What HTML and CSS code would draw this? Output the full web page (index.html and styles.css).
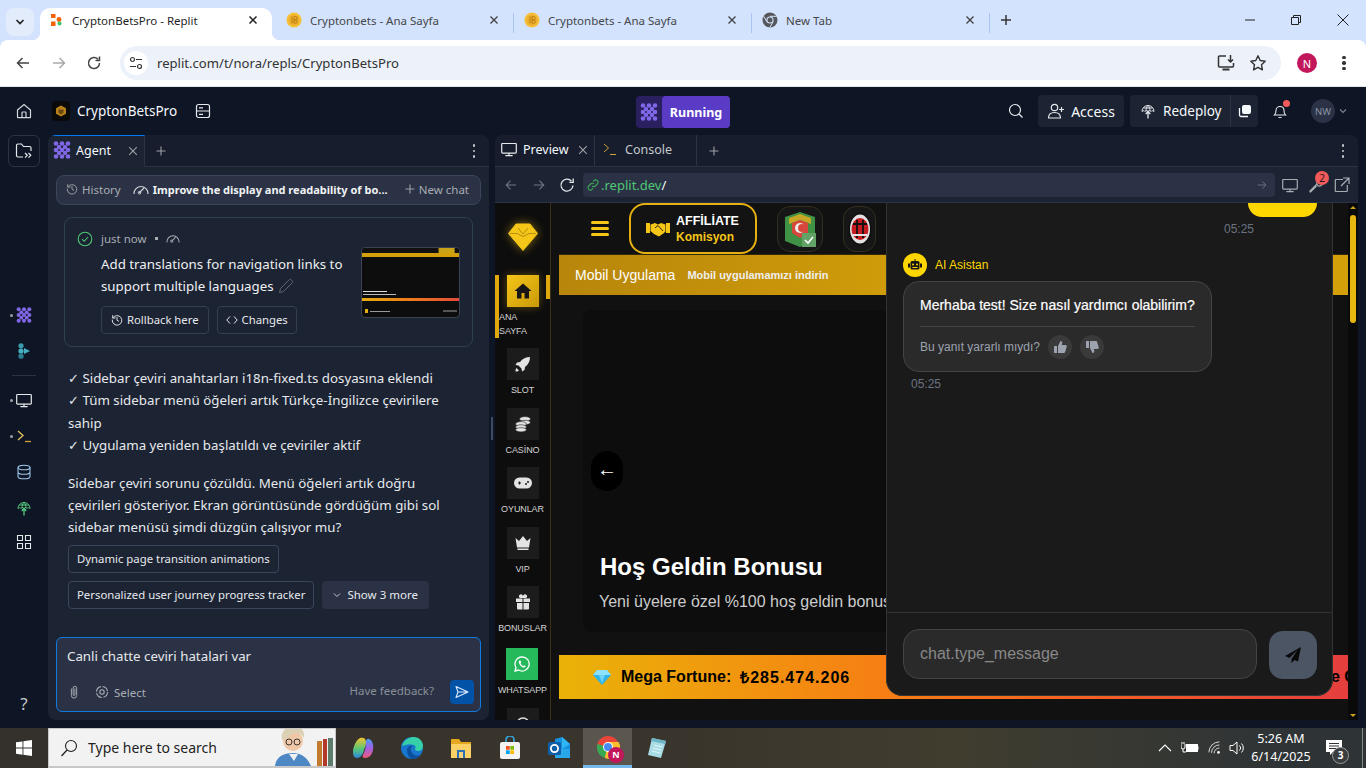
FILE: index.html
```html
<!DOCTYPE html>
<html lang="tr">
<head>
<meta charset="utf-8">
<title>CryptonBetsPro - Replit</title>
<link rel="stylesheet" href="styles.css">
</head>
<body>
<svg class="sprite" xmlns="http://www.w3.org/2000/svg">
  <defs>
    <linearGradient id="cp1" x1="0" y1="0" x2="0" y2="1"><stop offset="0" stop-color="#f0c330"/><stop offset=".55" stop-color="#58c878"/><stop offset="1" stop-color="#2b86e0"/></linearGradient>
    <linearGradient id="cp2" x1="0" y1="0" x2="0" y2="1"><stop offset="0" stop-color="#4a9cf0"/><stop offset=".45" stop-color="#9a62e8"/><stop offset="1" stop-color="#f05a7a"/></linearGradient>
  </defs>
  <symbol id="agent" viewBox="0 0 18 18">
    <g fill="#8067e6"><circle cx="3" cy="2.500" r="2.300"/><circle cx="9" cy="2.500" r="2.300"/><circle cx="15" cy="2.500" r="2.300"/><circle cx="6" cy="6" r="2.200"/><circle cx="12" cy="6" r="2.200"/><circle cx="3" cy="9" r="2.300"/><circle cx="9" cy="9" r="2.300"/><circle cx="15" cy="9" r="2.300"/><circle cx="6" cy="12" r="2.200"/><circle cx="12" cy="12" r="2.200"/><circle cx="3" cy="15.500" r="2.300"/><circle cx="9" cy="15.500" r="2.300"/><circle cx="15" cy="15.500" r="2.300"/></g>
  </symbol>
  <symbol id="coin" viewBox="0 0 16 16">
    <circle cx="8" cy="8" r="7.6" fill="#f5c13c"/><circle cx="8" cy="8" r="5.6" fill="#eeb02c"/><path d="M6 4.5v7M8 4.5h1.5a1.6 1.6 0 0 1 0 3.4H8m0 0h1.8a1.6 1.6 0 0 1 0 3.2H8V4.5" fill="none" stroke="#b97f15" stroke-width="1"/>
  </symbol>
  <symbol id="gauge" viewBox="0 0 16 12">
    <path d="M1 10.5a7 7 0 0 1 14 0M6.5 9.5l4-4" fill="none" stroke="currentColor" stroke-width="1.2" stroke-linecap="round"/><circle cx="6.5" cy="9.7" r="1.3" fill="none" stroke="currentColor"/>
  </symbol>
  <symbol id="history" viewBox="0 0 14 14">
    <path d="M2.2 4.5A5.6 5.6 0 1 1 1.4 7M2 1.8v2.9h2.9M7 4v3.2l2 1.2" fill="none" stroke="currentColor" stroke-width="1.1" stroke-linecap="round"/>
  </symbol>
  <symbol id="monitor" viewBox="0 0 16 16">
    <path d="M1.5 2.5h13a.8.8 0 0 1 .8.8v8a.8.8 0 0 1-.8.8h-13a.8.8 0 0 1-.8-.8v-8a.8.8 0 0 1 .8-.8zM8 12v2.4M4.8 14.6h6.4" fill="none" stroke="currentColor" stroke-width="1.2" stroke-linecap="round"/>
  </symbol>
  <symbol id="close" viewBox="0 0 10 10">
    <path d="M1.2 1.2l7.6 7.6M8.8 1.2L1.2 8.8" fill="none" stroke="currentColor" stroke-width="1.1"/>
  </symbol>
  <symbol id="plus" viewBox="0 0 10 10">
    <path d="M5 .5v9M.5 5h9" fill="none" stroke="currentColor" stroke-width="1.1"/>
  </symbol>
  <symbol id="arrow" viewBox="0 0 14 14">
    <path d="M13 7H1.5M6.5 2L1.5 7l5 5" fill="none" stroke="currentColor" stroke-width="1.3"/>
  </symbol>
  <symbol id="deploy" viewBox="0 0 16 16">
    <path d="M2 8.500A6 6 0 0 1 14 8.500c-1-1-2.500-1-3 0-.6-1-2.400-1-3 0-.6-1-2.400-1-3 0-.5-1-2-1-3 0zM8 2.500C6.500 4 6 6 6 8M8 2.500C9.500 4 10 6 10 8M3.500 5h9" fill="none" stroke="currentColor" stroke-width="1"/>
    <path d="M8 15.500V8.500M5.700 11L8 8.500 10.300 11" fill="none" stroke="currentColor" stroke-width="1.300"/>
  </symbol>
</svg>

<header class="tabstrip">
  <button class="tablist"><svg class="i10" viewBox="0 0 10 10"><path d="M1.5 3l3.5 3.6L8.5 3" fill="none" stroke="#1f1f1f" stroke-width="1.5"/></svg></button>
  <div class="tab tab-active">
    <svg class="i14" viewBox="0 0 14 14"><rect x="1" y="1" width="4.500" height="4" fill="#f26207"/><rect x="1" y="8.500" width="4.500" height="4.500" fill="#f26207"/><circle cx="9" cy="6.500" r="2.400" fill="#f26207"/><circle cx="9.500" cy="10.500" r="2" fill="#39c46a"/></svg>
    <span class="tab-title tab-title-active">CryptonBetsPro - Replit</span>
    <svg class="i10 tab-x" viewBox="0 0 10 10"><path d="M1.5 1.500l7 7M8.500 1.500l-7 7" fill="none" stroke="#222" stroke-width="1.5"/></svg>
  </div>
  <div class="tab tab-wide">
    <svg class="i16"><use href="#coin"/></svg>
    <span class="tab-title">Cryptonbets - Ana Sayfa</span>
    <svg class="i10 tab-x" viewBox="0 0 10 10"><path d="M1.5 1.500l7 7M8.500 1.500l-7 7" fill="none" stroke="#444" stroke-width="1.4"/></svg>
  </div>
  <div class="tab tab-sep">
    <svg class="i16"><use href="#coin"/></svg>
    <span class="tab-title">Cryptonbets - Ana Sayfa</span>
    <svg class="i10 tab-x" viewBox="0 0 10 10"><path d="M1.5 1.500l7 7M8.500 1.500l-7 7" fill="none" stroke="#444" stroke-width="1.4"/></svg>
  </div>
  <div class="tab tab-sep">
    <svg class="i16" viewBox="0 0 16 16"><circle cx="8" cy="8" r="7.500" fill="#55575c"/><circle cx="8" cy="8" r="3.600" fill="#d3e3fd"/><circle cx="8" cy="8" r="2.500" fill="#55575c"/><path d="M8 4.300h6.600M4.900 9.800L1.700 4.300M11.100 9.800L7.800 15.400" stroke="#d3e3fd" stroke-width="1"/></svg>
    <span class="tab-title">New Tab</span>
    <svg class="i10 tab-x" viewBox="0 0 10 10"><path d="M1.5 1.500l7 7M8.500 1.500l-7 7" fill="none" stroke="#444" stroke-width="1.4"/></svg>
  </div>
  <div class="newtab-wrap"><svg class="i12" viewBox="0 0 12 12"><path d="M6 1v10M1 6h10" stroke="#333" stroke-width="1.5"/></svg></div>
  <div class="winctl">
    <svg class="i10" viewBox="0 0 10 10"><path d="M0 5h10" stroke="#222"/></svg>
    <svg class="i10" viewBox="0 0 10 10"><path d="M2.500 2.500V.5h7v7h-2M.5 2.500h7v7h-7z" fill="none" stroke="#222"/></svg>
    <svg class="i12" viewBox="0 0 12 12"><path d="M.5.5l11 11M11.500.5l-11 11" stroke="#222"/></svg>
  </div>
</header>

<nav class="toolbar">
  <svg class="i16 tb-back" viewBox="0 0 16 16"><path d="M14 8H2.500M7.500 3L2.500 8l5 5" fill="none" stroke="#444" stroke-width="1.500"/></svg>
  <svg class="i16 tb-fwd" viewBox="0 0 16 16"><path d="M2 8h11.500M8.500 3l5 5-5 5" fill="none" stroke="#aaa" stroke-width="1.500"/></svg>
  <svg class="i16 tb-reload" viewBox="0 0 16 16"><path d="M13.500 8A5.500 5.500 0 1 1 12 4.300M13.500 1.500v4h-4" fill="none" stroke="#444" stroke-width="1.500"/></svg>
  <div class="omnibox">
    <span class="siteinfo"><svg class="i14" viewBox="0 0 14 14"><circle cx="3.500" cy="3.500" r="2" fill="none" stroke="#333" stroke-width="1.200"/><path d="M7 3.500h6M1 10.500h6" stroke="#333" stroke-width="1.200"/><circle cx="10.500" cy="10.500" r="2" fill="none" stroke="#333" stroke-width="1.200"/></svg></span>
    <span class="omni-url">replit.com/t/nora/repls/CryptonBetsPro</span>
    <svg class="i18 omni-install" viewBox="0 0 18 18"><path d="M9 2H2.500a1 1 0 0 0-1 1v9a1 1 0 0 0 1 1h13a1 1 0 0 0 1-1V9" fill="none" stroke="#333" stroke-width="1.500"/><path d="M13.500 1v6.500M11 5.500l2.500 2.500L16 5.500" fill="none" stroke="#333" stroke-width="1.500"/><path d="M5.500 15.500h7" stroke="#333" stroke-width="2"/></svg>
    <svg class="i18" viewBox="0 0 18 18"><path d="M9 1.800l2.200 4.700 5 .7-3.700 3.500.9 5.100L9 13.300l-4.400 2.500.9-5.100L1.800 7.200l5-.7z" fill="none" stroke="#333" stroke-width="1.400" stroke-linejoin="round"/></svg>
  </div>
  <span class="profile">N</span>
  <span class="chrome-dots"><i></i><i></i><i></i></span>
</nav>

<div class="app">
  <div class="topbar">
    <svg class="i16 home-ic" viewBox="0 0 16 16"><path d="M1.500 7L8 1.500 14.500 7v7a.7.7 0 0 1-.7.7H2.200a.7.7 0 0 1-.7-.7zM6 14.700V9.500a.5.5 0 0 1 .5-.5h3a.5.5 0 0 1 .5.500v5.200" fill="none" stroke="#d4d9de" stroke-width="1.200"/></svg>
    <span class="project-logo"><svg class="i12" viewBox="0 0 12 12"><path d="M6 .5l5 2.800v5.400L6 11.500 1 8.700V3.300z" fill="#b6801a"/><path d="M3.500 4.500h5v3L6 9.500l-2.500-2z" fill="#6a4610"/></svg></span>
    <span class="project-name">CryptonBetsPro</span>
    <svg class="i16 db-ic" viewBox="0 0 16 16"><rect x="1.500" y="1.500" width="13" height="13" rx="2" fill="none" stroke="#e6e9ec" stroke-width="1.200"/><path d="M1.500 8h13M4 4.800h4M4 11.300h4" stroke="#e6e9ec" stroke-width="1.200"/></svg>
    <div class="run-group">
      <span class="run-left"><svg class="i18"><use href="#agent"/></svg></span>
      <span class="run-right">Running</span>
    </div>
    <div class="top-right">
      <svg class="i16" viewBox="0 0 16 16"><circle cx="7" cy="7" r="5.500" fill="none" stroke="#e6e9ec" stroke-width="1.200"/><path d="M11 11l3.500 3.500" stroke="#e6e9ec" stroke-width="1.200"/></svg>
      <button class="access-btn"><svg class="i18" viewBox="0 0 18 18"><circle cx="7.500" cy="5.500" r="3.200" fill="none" stroke="#e6e9ec" stroke-width="1.200"/><path d="M1.500 16c0-3.500 2.500-5.500 6-5.500s6 2 6 5.500zM14.500 5v5M12 7.500h5" fill="none" stroke="#e6e9ec" stroke-width="1.200"/></svg>Access</button>
      <div class="deploy-group">
        <span class="deploy-main"><svg class="i16 ic-light"><use href="#deploy"/></svg>Redeploy</span>
        <span class="deploy-copy"><svg class="i14" viewBox="0 0 14 14"><rect x="4" y="1" width="9" height="9" rx="2" fill="#f5f9fc"/><path d="M1.500 4v7a1.500 1.500 0 0 0 1.500 1.500h7" fill="none" stroke="#f5f9fc" stroke-width="1.300"/></svg></span>
      </div>
      <span class="bell"><svg class="i16" viewBox="0 0 16 16"><path d="M2.500 12c1.200-1 1.500-2.500 1.500-4.500 0-2.500 1.800-4 4-4s4 1.500 4 4c0 2 .3 3.500 1.500 4.500zM6.500 14.500h3" fill="none" stroke="#e6e9ec" stroke-width="1.100"/></svg><i class="bell-dot"></i></span>
      <span class="user-avatar">NW</span>
      <svg class="i10" viewBox="0 0 10 10"><path d="M2 3.500l3 3 3-3" fill="none" stroke="#7d8592" stroke-width="1.100"/></svg>
    </div>
  </div>

  <div class="workspace">
    <aside class="rail">
      <span class="rail-files"><svg class="i18" viewBox="0 0 18 18"><path d="M8 15H3a1.500 1.500 0 0 1-1.500-1.500v-10A1.500 1.500 0 0 1 3 2h3.500l2 2.500h6A1.500 1.500 0 0 1 16 6v3" fill="none" stroke="#e6e9ec" stroke-width="1.200"/><path d="M10 11l2.300 2.300L10 15.600M13.500 11l2.300 2.300-2.300 2.300" fill="none" stroke="#e6e9ec" stroke-width="1.200"/></svg></span>
      <span class="rail-item rail-agent"><i class="rail-dot"></i><svg class="i16"><use href="#agent"/></svg></span>
      <span class="rail-item rail-gap20"><svg class="i16" viewBox="0 0 16 16"><circle cx="5" cy="2.800" r="2.600" fill="#3a9aad"/><circle cx="5" cy="8" r="2.600" fill="#45b0c2"/><circle cx="5" cy="13.200" r="2.600" fill="#2c7f90"/><path d="M8 5l6 3-6 3z" fill="#45b0c2"/></svg></span>
      <span class="rail-sep"></span>
      <span class="rail-item"><i class="rail-dot"></i><svg class="i16 ic-light"><use href="#monitor"/></svg></span>
      <span class="rail-item rail-gap20"><i class="rail-dot rail-dot-o"></i><svg class="i16" viewBox="0 0 16 16"><path d="M2 3l5 4.500L2 12" fill="none" stroke="#e6c25e" stroke-width="1.300"/><path d="M9 13.500h6" stroke="#cfa23a" stroke-width="1.300"/></svg></span>
      <span class="rail-item rail-gap20"><svg class="i16" viewBox="0 0 16 16"><ellipse cx="8" cy="3.500" rx="6" ry="2.300" fill="none" stroke="#9cc6ea" stroke-width="1.100"/><path d="M2 3.500v9c0 1.200 2.700 2.300 6 2.300s6-1.100 6-2.300v-9M2 8c0 1.200 2.700 2.300 6 2.300s6-1.100 6-2.300" fill="none" stroke="#9cc6ea" stroke-width="1.100"/></svg></span>
      <span class="rail-item rail-gap20 rail-green"><svg class="i16"><use href="#deploy"/></svg></span>
      <span class="rail-item rail-gap18"><svg class="i16" viewBox="0 0 16 16"><path d="M1.500 1.500h5v5h-5zM9.500 1.500h5v5h-5zM1.500 9.500h5v5h-5zM9.500 9.500h5v5h-5z" fill="none" stroke="#e6e9ec" stroke-width="1.100"/></svg></span>
      <span class="rail-help">?</span>
    </aside>

    <section class="agent">
      <div class="ptabs">
        <div class="ptab ptab-agent">
          <svg class="i18"><use href="#agent"/></svg>
          <span class="ptab-name">Agent</span>
          <svg class="i10 ptab-x"><use href="#close"/></svg>
        </div>
        <svg class="i10 ptab-plus"><use href="#plus"/></svg>
        <span class="kebab"><i></i><i></i><i></i></span>
      </div>

      <div class="historybar">
        <svg class="i12 hb-ic"><use href="#history"/></svg>
        <span class="hb-muted">History</span>
        <svg class="i16 hb-gauge"><use href="#gauge"/></svg>
        <span class="hb-title">Improve the display and readability of bo...</span>
        <svg class="i10 hb-plus"><use href="#plus"/></svg>
        <span class="hb-muted">New chat</span>
      </div>

      <article class="checkpoint">
        <svg class="i16 cp-check" viewBox="0 0 16 16"><circle cx="8" cy="8" r="6.800" fill="none" stroke="#4fc774" stroke-width="1.100"/><path d="M5 8.200l2.200 2.100L11 6" fill="none" stroke="#4fc774" stroke-width="1.100"/></svg>
        <div class="cp-body">
          <div class="cp-meta"><span>just now</span><i class="cp-dot"></i><svg class="i14"><use href="#gauge"/></svg></div>
          <p class="cp-title">Add translations for navigation links to<br>support multiple languages <svg class="i16 cp-pen" viewBox="0 0 16 16"><path d="M1.500 14.500l1-4L11 2a1.500 1.500 0 0 1 2.500 0l.5.500a1.500 1.500 0 0 1 0 2.500l-8.500 8.500z" fill="none" stroke="#5c6470" stroke-width="1"/></svg></p>
          <div class="cp-btns">
            <button class="cp-btn cp-btn-1"><svg class="i12"><use href="#history"/></svg>Rollback here</button>
            <button class="cp-btn"><svg class="i12" viewBox="0 0 12 12"><path d="M4 2.500L.8 6 4 9.500M8 2.500L11.200 6 8 9.500" fill="none" stroke="currentColor" stroke-width="1"/></svg>Changes</button>
          </div>
        </div>
        <div class="thumb">
          <div class="th-top"></div>
          <div class="th-gold"></div>
          <div class="th-dark"><span class="th-l1"></span><span class="th-l2"></span></div>
          <div class="th-fortune"></div>
          <div class="th-foot"><span class="th-y"></span><span class="th-t"></span><span class="th-r"></span></div>
        </div>
      </article>

      <div class="messages">
        <p class="msg">✓ Sidebar çeviri anahtarları i18n-fixed.ts dosyasına eklendi<br>✓ Tüm sidebar menü öğeleri artık Türkçe-İngilizce çevirilere sahip<br>✓ Uygulama yeniden başlatıldı ve çeviriler aktif</p>
        <p class="msg msg-2">Sidebar çeviri sorunu çözüldü. Menü öğeleri artık doğru çevirileri gösteriyor. Ekran görüntüsünde gördüğüm gibi sol sidebar menüsü şimdi düzgün çalışıyor mu?</p>
        <div class="chips">
          <button class="chip">Dynamic page transition animations</button>
          <div class="chip-break"></div>
          <button class="chip">Personalized user journey progress tracker</button>
          <button class="chip-more"><svg class="i10" viewBox="0 0 10 10"><path d="M2 3.500l3 3 3-3" fill="none" stroke="#c2c8cc" stroke-width="1"/></svg>Show 3 more</button>
        </div>
      </div>

      <div class="composer">
        <div class="composer-text">Canli chatte ceviri hatalari var</div>
        <div class="composer-row">
          <svg class="i14 c-clip" viewBox="0 0 14 16"><path d="M4 4v8a3 3 0 0 0 6 0V3.500a2 2 0 0 0-4 0V11a1 1 0 0 0 2 0V4" fill="none" stroke="#a8adb3" stroke-width="1.100"/></svg>
          <svg class="i14 c-target" viewBox="0 0 14 14"><circle cx="7" cy="7" r="5.500" fill="none" stroke="#a8adb3" stroke-width="1.100" stroke-dasharray="7 1.600"/><circle cx="7" cy="7" r="2.200" fill="none" stroke="#a8adb3" stroke-width="1.100"/></svg>
          <span class="c-select">Select</span>
          <span class="c-feedback">Have feedback?</span>
          <button class="c-send"><svg class="i14" viewBox="0 0 14 14"><path d="M1 1.500L13 7 1 12.500 3 7zM3 7h10" fill="none" stroke="#dbeaff" stroke-width="1.100" stroke-linejoin="round"/></svg></button>
        </div>
      </div>
    </section>

    <div class="splitter"><i></i></div>

    <section class="preview">
      <div class="ptabs ptabs-preview">
        <div class="ptab ptab-preview">
          <svg class="i16 ic-light"><use href="#monitor"/></svg>
          <span class="ptab-name">Preview</span>
          <svg class="i10 ptab-x"><use href="#close"/></svg>
        </div>
        <div class="ptab ptab-console">
          <svg class="i14" viewBox="0 0 14 14"><path d="M1 2l4.500 4L1 10" fill="none" stroke="#cfa23a" stroke-width="1"/><path d="M7 12.500h6" stroke="#cfa23a" stroke-width="1"/></svg>
          <span class="ptab-name ptab-dim">Console</span>
        </div>
        <svg class="i10 ptab-plus ptab-plus-p"><use href="#plus"/></svg>
        <span class="kebab"><i></i><i></i><i></i></span>
      </div>
      <div class="urlbar">
        <svg class="i12 u-back"><use href="#arrow"/></svg>
        <svg class="i12 u-fwd flip"><use href="#arrow"/></svg>
        <svg class="i16 u-reload" viewBox="0 0 16 16"><path d="M14 8.500A6 6 0 1 1 12.400 4M14.200 1.500v3.800h-3.800" fill="none" stroke="#e6e9ec" stroke-width="1.300"/></svg>
        <div class="u-field">
          <svg class="i12 u-link" viewBox="0 0 12 12"><path d="M5 7a2.300 2.300 0 0 0 3.300 0l2-2A2.300 2.300 0 0 0 7 1.700L6 2.700M7 5a2.300 2.300 0 0 0-3.300 0l-2 2A2.300 2.300 0 0 0 5 10.300l1-1" fill="none" stroke="#3aa856" stroke-width="1.100"/></svg>
          <span class="u-host">.replit.dev</span><span class="u-path">/</span>
          <svg class="i10 u-go flip"><use href="#arrow"/></svg>
        </div>
        <svg class="i16 u-ic"><use href="#monitor"/></svg>
        <span class="u-wrench"><svg class="i16 u-ic2" viewBox="0 0 16 16"><path d="M1.500 14.500L9 7M9 7a4 4 0 0 1 5-5l-2 2 1 2 2-1a4 4 0 0 1-5 4zM1.500 14.500l1 .500 6-6" fill="none" stroke="#a8adb3" stroke-width="1.100"/></svg><b class="u-badge">2</b></span>
        <svg class="i16 u-ic3" viewBox="0 0 16 16"><path d="M9 2.500H2a.7.700 0 0 0-.7.700v10.600a.7.700 0 0 0 .7.700h10.600a.7.700 0 0 0 .7-.7V8M9 1h6v6M15 1L7 9" fill="none" stroke="#a8adb3" stroke-width="1.200"/></svg>
      </div>

      <div class="site">
        <aside class="site-side">
          <div class="site-logo"><svg viewBox="0 0 30 28" class="gem"><path d="M8 1h14l7.500 9.500L15 27.500.5 10.500z" fill="#f5c518" stroke="#f5c518" stroke-linejoin="round"/><path d="M10 5l5 6 5-6M2 10.500h7l6 3 6-3h7" fill="none" stroke="#a5820d" stroke-width=".8"/></svg></div>
          <div class="nav-first">
            <span class="nav-bar-l"></span><span class="nav-bar-r"></span>
            <span class="nav-box nav-box-on"><svg class="i18" viewBox="0 0 18 18"><path d="M9 1.500L.5 9h2.500v7.500h4.500V11h3v5.500H15V9h2.500z" fill="#161616"/></svg></span>
            <span class="nav-label nav-label-l">ANA<br>SAYFA</span>
          </div>
          <div class="nav-item"><span class="nav-box"><svg class="i16" viewBox="0 0 16 16"><path d="M15 1c-4 0-7.500 1.500-10 5L2 6.500 .5 9l3 .5 3 3 .5 3 2.500-1.500.5-3c3.500-2.500 5-6 5-10zM1.500 12c-1 1-1 2.500-1 3.500 1 0 2.500 0 3.500-1z" fill="#e3e3e3"/></svg></span><span class="nav-label">SLOT</span></div>
          <div class="nav-item"><span class="nav-box"><svg class="i16" viewBox="0 0 16 16"><g fill="#e3e3e3" stroke="#1c1c1c" stroke-width=".6"><ellipse cx="10" cy="3" rx="5.500" ry="2.400"/><ellipse cx="10" cy="6.500" rx="5.500" ry="2.200"/><ellipse cx="6" cy="8" rx="5.500" ry="2.400"/><ellipse cx="6" cy="11" rx="5.500" ry="2.200"/><ellipse cx="6" cy="13.800" rx="5.500" ry="2.100"/></g></svg></span><span class="nav-label">CASİNO</span></div>
          <div class="nav-item"><span class="nav-box"><svg class="i18" viewBox="0 0 18 18"><rect y="3.500" width="18" height="11" rx="5.500" fill="#e3e3e3"/><path d="M4 9h3M5.500 7.500v3" stroke="#1c1c1c" stroke-width="1.100"/><circle cx="12" cy="10" r="1" fill="#1c1c1c"/><circle cx="14" cy="8" r="1" fill="#1c1c1c"/></svg></span><span class="nav-label">OYUNLAR</span></div>
          <div class="nav-item"><span class="nav-box"><svg class="i16" viewBox="0 0 16 16"><path d="M.5 3l3.500 3L8 1l4 5 3.500-3-1.500 9.500H2zM2.500 13.500h11V15h-11z" fill="#e3e3e3"/></svg></span><span class="nav-label">VIP</span></div>
          <div class="nav-item"><span class="nav-box"><svg class="i16" viewBox="0 0 16 16"><path d="M1 4.500h6.500V8H1zM8.500 4.500H15V8H8.500zM2 9h5.500v6.500H3a1 1 0 0 1-1-1zM8.500 9H14v5.500a1 1 0 0 1-1 1H8.500zM4.500 1a2 2 0 0 1 3.500 1.500A2 2 0 0 1 11.500 1 1.800 1.800 0 0 1 11 4H5A1.800 1.800 0 0 1 4.500 1z" fill="#e3e3e3"/></svg></span><span class="nav-label">BONUSLAR</span></div>
          <div class="nav-item nav-item-wa"><span class="nav-box nav-box-wa"><svg class="i16" viewBox="0 0 16 16"><path d="M8 1a7 7 0 0 0-6 10.500L1 15l3.600-1A7 7 0 1 0 8 1z" fill="none" stroke="#fff" stroke-width="1.300"/><path d="M5.500 4.500c-1 1-1 2.500.5 4.500s3 2.700 4.300 2.500c1-.2 1.500-1 1.300-1.500l-1.500-.8-.8.800C8.500 10 6.800 8.300 6.500 7.300l.8-.8-.7-1.700c-.4-.5-.8-.500-1.100-.3z" fill="#fff"/></svg></span><span class="nav-label">WHATSAPP</span></div>
          <div class="nav-item"><span class="nav-box"><svg class="i16" viewBox="0 0 16 16"><circle cx="8" cy="8" r="6" fill="none" stroke="#e3e3e3" stroke-width="1.500"/></svg></span></div>
        </aside>

        <div class="site-main">
          <div class="site-head">
            <span class="burger"><i></i><i></i><i></i></span>
            <div class="aff">
              <svg class="aff-ic" viewBox="0 0 24 16"><path d="M0 2h4v10H0zM20 2h4v10h-4zM4.500 3.500L9 2l3 1.500L15 2l4.500 1.500v7L18 12l-5 3.500-2-1-3-1.500-3.500-3z" fill="#f5c518"/><path d="M9 7l3-2.500 5 5.500" fill="none" stroke="#161616" stroke-width=".9"/></svg>
              <div class="aff-text"><b class="aff-1">AFFİLİATE</b><b class="aff-2">Komisyon</b></div>
            </div>
            <span class="team"><svg class="team-1" viewBox="0 0 32 36"><path d="M1 6l15-5 15 5v30l-8-3-7 3-15-6z" fill="#3e9145"/><path d="M5 7l11-4 11 4v6L16 9 5 13z" fill="#c8a626"/><path d="M8 12l8-3 8 3v10l-8 5-8-5z" fill="#d8473b"/><circle cx="16" cy="17" r="5" fill="#eee"/><circle cx="18" cy="17" r="4" fill="#d8473b"/><rect x="18" y="22" width="14" height="14" fill="#62a266"/><path d="M21 29l3 3 5-6" fill="none" stroke="#fff" stroke-width="1.600"/></svg></span>
            <span class="team team-m"><svg class="team-2" viewBox="0 0 24 34"><ellipse cx="12" cy="17" rx="11.500" ry="16.500" fill="#111"/><ellipse cx="12" cy="17" rx="10" ry="14.500" fill="#e2e2e2"/><ellipse cx="12" cy="17" rx="8.500" ry="11" fill="#c51a1f"/><path d="M5 12h14M9 8v18M15 8v18" stroke="#111" stroke-width="1.800"/><path d="M5 23h14" stroke="#e2e2e2" stroke-width="2"/></svg></span>
          </div>
          <div class="promo"><span class="promo-1">Mobil Uygulama</span><span class="promo-2">Mobil uygulamamızı indirin</span></div>
          <div class="hero">
            <span class="hero-arrow">←</span>
            <h1 class="hero-title">Hoş Geldin Bonusu</h1>
            <p class="hero-sub">Yeni üyelere özel %100 hoş geldin bonusu</p>
          </div>
          <div class="fortune">
            <svg class="fortune-gem" viewBox="0 0 18 18"><path d="M4 2h10l4 5-9 10L0 7z" fill="#2fb4ee"/><path d="M4 2h10l4 5H0z" fill="#8ee2fb"/><path d="M6 7h6l-3 8z" fill="#70d3f6"/></svg>
            <b class="fortune-name">Mega Fortune:</b><b class="fortune-val">₺285.474.206</b>
            <b class="fortune-next">Mega Fortune C</b>
          </div>
        </div>

        <div class="site-scroll">
          <span class="sc-up"></span><span class="sc-thumb"></span><span class="sc-down"></span>
        </div>

        <div class="chat">
          <div class="chat-scroll">
            <div class="chat-user-bubble"></div>
            <div class="chat-time-r">05:25</div>
            <div class="chat-who">
              <span class="chat-bot"><svg class="i14" viewBox="0 0 14 14"><path d="M7 1v2" stroke="#161616"/><rect x="2.500" y="3" width="9" height="8.500" rx="1.500" fill="#161616"/><rect x="0" y="5.500" width="2" height="4" fill="#161616"/><rect x="12" y="5.500" width="2" height="4" fill="#161616"/><circle cx="5" cy="6.500" r="1" fill="#ffd700"/><circle cx="9" cy="6.500" r="1" fill="#ffd700"/><path d="M4.500 9.500h5" stroke="#ffd700"/></svg></span>
              <span class="chat-name">AI Asistan</span>
            </div>
            <div class="chat-bubble">
              <div class="chat-bubble-text">Merhaba test! Size nasıl yardımcı olabilirim?</div>
              <div class="chat-rate">
                <span class="chat-rate-q">Bu yanıt yararlı mıydı?</span>
                <span class="rate-btn"><svg class="i14" viewBox="0 0 14 14"><path d="M1 6h3v7H1zM5 6l2.500-5c1.500 0 2 1 1.700 2.200L8.800 5h3.700c1 0 1.500.8 1.200 1.700l-1.500 5c-.2.800-.8 1.300-1.600 1.300H5z" fill="#9ca3af"/></svg></span>
                <span class="rate-btn"><svg class="i14 thumb-down" viewBox="0 0 14 14"><path d="M1 6h3v7H1zM5 6l2.500-5c1.500 0 2 1 1.700 2.200L8.800 5h3.700c1 0 1.500.8 1.200 1.700l-1.500 5c-.2.800-.8 1.300-1.600 1.300H5z" fill="#9ca3af"/></svg></span>
              </div>
            </div>
            <div class="chat-time-l">05:25</div>
          </div>
          <div class="chat-input-row">
            <div class="chat-input">chat.type_message</div>
            <button class="chat-send"><svg class="i16" viewBox="0 0 16 16"><path d="M16 0L0 9l4.500 2 8-8-6 9v4l3-3 3.500 1.500z" fill="#0a0a0a"/></svg></button>
          </div>
        </div>
      </div>
    </section>
  </div>
</div>

<footer class="taskbar">
  <span class="start"><svg class="i16" viewBox="0 0 16 16"><path d="M0 2.300l6.500-.9v6.200H0zM7.400 1.300L16 0v7.600H7.400zM0 8.500h6.500v6.200L0 13.700zM7.400 8.500H16V16l-8.600-1.200z" fill="#fff"/></svg></span>
  <div class="search">
    <svg class="i18 s-mag" viewBox="0 0 18 18"><circle cx="11" cy="7" r="5.500" fill="none" stroke="#222" stroke-width="1.100"/><path d="M7 11l-5.500 6" stroke="#222" stroke-width="1.300"/></svg>
    <span class="s-text">Type here to search</span>
    <svg class="s-art" viewBox="0 0 62 40"><path d="M2 40c1-10 10-13 18-13s14 4 18 13z" fill="#4d88c4"/><path d="M16 28l5 7 4-7z" fill="#f1f1f1"/><circle cx="20" cy="15" r="10" fill="#f0c8a8"/><path d="M9 14C7 4 16-1 23 0c7 1 9 8 8 12-2-3-4-5-7-5-4 0-7 1-9 5z" fill="#dcd0b4"/><circle cx="16" cy="16" r="3" fill="none" stroke="#333"/><circle cx="24" cy="16" r="3" fill="none" stroke="#333"/><rect x="44" y="15" width="5" height="25" fill="#c27a2f"/><rect x="50" y="13" width="4" height="27" fill="#b33a2a"/><rect x="55" y="12" width="5" height="28" fill="#5d7d6c"/></svg>
  </div>
  <div class="tb-apps">
    <span class="app-ic"><svg class="i24" viewBox="0 0 24 24"><path d="M18 3c3 1 5 5 4 11-1 5-4 8-8 8-2 0-3-1-2-3l2-5c1-3 0-6 1-9 .4-1.500 1.800-2.500 3-2z" fill="url(#cp2)"/><path d="M9 2c3-1 6 0 6 4 0 2-1 5-2 8-1 4-3 8-7 8-3 0-4-3-4-6 0-5 3-12 7-14z" fill="url(#cp1)"/></svg></span>
    <span class="app-ic"><svg class="i24" viewBox="0 0 24 24"><circle cx="12" cy="12" r="11" fill="#1877cc"/><path d="M2 10C4 3 10 1 14 1c5 0 9 4 9 9 0 3-2 5-5 5-2 0-3-1-3-2 1-1 1-3-1-4-5-2-9 0-12 1z" fill="#36d0a8"/><path d="M7 14c0-3 3-5 6-4-3 1-3 5 0 8 2 2 5 2 7 1-2 3-5 4-8 4-3-1-5-5-5-9z" fill="#0c4f9c"/></svg></span>
    <span class="app-ic"><svg class="i24" viewBox="0 0 24 24"><path d="M2 3h8l2 3h10v16H2z" fill="#e6a81e"/><path d="M2 8h20v14H2z" fill="#fad165"/><path d="M8 14h8v8H8z" fill="#2f6fb4"/><path d="M10 16h4v6h-4z" fill="#f1d27a"/></svg></span>
    <span class="app-ic"><svg class="i24" viewBox="0 0 24 24"><path d="M8 7V4a4 4 0 0 1 8 0v3" fill="none" stroke="#35a6dc" stroke-width="1.600"/><rect x="2" y="6" width="20" height="17" rx="2" fill="#f3f3f3"/><rect x="8" y="10" width="3.700" height="3.700" fill="#f25022"/><rect x="12.300" y="10" width="3.700" height="3.700" fill="#7fba00"/><rect x="8" y="14.300" width="3.700" height="3.700" fill="#00a4ef"/><rect x="12.300" y="14.300" width="3.700" height="3.700" fill="#ffb900"/></svg></span>
    <span class="app-ic"><svg class="i24" viewBox="0 0 24 24"><path d="M8 3l7-2 8 7v13H8z" fill="#1490df"/><path d="M15 1l8 7-8 5z" fill="#30b5f5"/><path d="M8 13h15v9H8z" fill="#28a8ea"/><rect x="1" y="6" width="13" height="13" rx="1.500" fill="#0f5fa8"/><circle cx="7.500" cy="12.500" r="3.600" fill="none" stroke="#fff" stroke-width="1.800"/></svg></span>
    <span class="app-ic app-chrome"><svg class="i24" viewBox="0 0 24 24"><circle cx="12" cy="12" r="11" fill="#e9453a"/><path d="M12 12L1.500 9A11 11 0 0 0 9 23z" fill="#37a853"/><path d="M12 7h10.500A11 11 0 0 1 9 23z" fill="#fbc02d"/><circle cx="12" cy="12" r="5" fill="#fff"/><circle cx="12" cy="12" r="4" fill="#4a8af4"/></svg><b class="chrome-badge">N</b></span>
    <span class="app-ic"><svg class="i24" viewBox="0 0 24 24"><path d="M7 2l14 3-5 17-13-3z" fill="#a9dde6"/><path d="M7 2l14 3-1 3L6 5z" fill="#6bb6c6"/><path d="M9 9l8 2M8 12l8 2M7 15l8 2" stroke="#e3f5f8" stroke-width="1"/></svg></span>
  </div>
  <div class="tray">
    <svg class="i14 t-up" viewBox="0 0 14 14"><path d="M1 10l6-6 6 6" fill="none" stroke="#fff" stroke-width="1.100"/></svg>
    <svg class="t-bat" viewBox="0 0 18 12"><path d="M0 2v3a2 2 0 0 0 4 0V2M1 0v2M3 0v2M2 7v3h3" fill="none" stroke="#fff"/><rect x="5.500" y="2.500" width="11" height="7" fill="#fff" stroke="#fff"/><path d="M17 4.500v3" stroke="#fff"/></svg>
    <svg class="i14 t-wifi" viewBox="0 0 16 16"><path d="M1 13A12 12 0 0 1 13 1M4 13.500A9 9 0 0 1 13 4.500M7 14a6 6 0 0 1 6-6" fill="none" stroke="#eee" stroke-width="1"/><circle cx="12" cy="13" r="1.500" fill="#fff"/></svg>
    <svg class="i16 t-vol" viewBox="0 0 16 16"><path d="M1 5.500h3L8 2v12l-4-3.500H1zM10.500 5.500a3.500 3.500 0 0 1 0 5M12.500 3.500a6.500 6.500 0 0 1 0 9" fill="none" stroke="#fff" stroke-width="1"/></svg>
    <div class="clock"><span>5:26 AM</span><span>6/14/2025</span></div>
    <span class="notif"><svg class="i18" viewBox="0 0 18 18"><path d="M1 1h16v12H8l-3 3v-3H1z" fill="#fff"/><path d="M4 4.500h10M4 7h10M4 9.500h7" stroke="#333"/></svg><b class="notif-n">3</b></span>
    <span class="showdesk"></span>
  </div>
</footer>
</body>
</html>
```

FILE: styles.css
```css
* { box-sizing: border-box; }
html, body { margin: 0; padding: 0; }
body { width: 1366px; height: 768px; overflow: hidden; display: flex; flex-direction: column; background: #d3e3fd; font-family: "Noto Sans", sans-serif; }
button { font: inherit; border: 0; padding: 0; background: none; color: inherit; }
svg { display: block; flex: none; }
i, b { font-style: normal; }
.sprite { position: absolute; width: 0; height: 0; overflow: hidden; }
.flip { transform: scaleX(-1); }
.i10 { width: 10px; height: 10px; }
.i12 { width: 12px; height: 12px; }
.i14 { width: 14px; height: 14px; }
.i16 { width: 16px; height: 16px; }
.i18 { width: 18px; height: 18px; }
.i24 { width: 24px; height: 24px; }
.ic-light { color: #e6e9ec; }

/* Browser chrome */
.tabstrip { height: 40px; display: flex; align-items: flex-end; flex: none; position: relative; }
.tablist { width: 28px; height: 28px; margin: 0 6px 4px 6px; border-radius: 8px; background: #e3ecfb; display: flex; align-items: center; justify-content: center; }
.tab { width: 238px; height: 32px; display: flex; align-items: center; padding: 0 12px 8px 11px; gap: 8px; position: relative; }
.tab-wide { width: 241px; padding-left: 14px; }
.tab-active { width: 232px; background: #fff; border-radius: 10px 10px 0 0; padding: 0 12px 8px 10px; }
.tab-active::before, .tab-active::after { content: ""; position: absolute; bottom: 0; width: 8px; height: 8px; }
.tab-active::before { left: -8px; background: radial-gradient(circle at 0 0, #d3e3fd 8px, #fff 8.5px); }
.tab-active::after { right: -8px; background: radial-gradient(circle at 100% 0, #d3e3fd 8px, #fff 8.5px); }
.tab-sep::before { content: ""; position: absolute; left: 0; top: 5px; bottom: 7px; width: 1px; background: #a9c6f2; }
.tab-title { flex: 1; font-size: 11.5px; color: #45474a; white-space: nowrap; }
.tab-title-active { color: #1f1f1f; }
.tab-x { margin-right: 2px; }
.newtab-wrap { position: relative; height: 32px; display: flex; align-items: center; padding: 0 0 8px 11px; }
.newtab-wrap::before { content: ""; position: absolute; left: 0; top: 5px; bottom: 7px; width: 1px; background: #a9c6f2; }
.winctl { position: absolute; right: 17px; top: 14px; display: flex; gap: 36px; align-items: center; }
.toolbar { height: 47px; flex: none; background: #fff; border-radius: 8px 8px 0 0; border-bottom: 1px solid #e4e6ea; display: flex; align-items: center; padding-left: 15px; }
.tb-fwd { margin-left: 20px; }
.tb-reload { margin-left: 19px; }
.omnibox { margin-left: 18px; width: 1161px; height: 34px; border-radius: 17px; background: #ecf1fa; display: flex; align-items: center; padding: 0 14px 0 4px; }
.siteinfo { width: 24px; height: 24px; border-radius: 50%; background: #fff; display: flex; align-items: center; justify-content: center; }
.omni-url { margin-left: 9px; flex: 1; font-size: 13.1px; color: #333; }
.omni-install { margin-right: 14px; }
.profile { margin-left: 16px; width: 20px; height: 20px; border-radius: 50%; background: #c2185b; color: #fff; font-size: 11px; display: flex; align-items: center; justify-content: center; }
.chrome-dots { margin-left: 25px; display: flex; flex-direction: column; gap: 2px; }
.chrome-dots i { width: 3.5px; height: 3.5px; border-radius: 50%; background: #333; }

/* Replit app */
.app { height: 641px; flex: none; background: #0e1525; color: #f5f9fc; display: flex; flex-direction: column; }
.topbar { height: 48px; flex: none; display: flex; align-items: center; position: relative; padding-left: 16px; }
.home-ic { margin-right: 20px; }
.project-logo { width: 18px; height: 20px; border-radius: 4px; background: #0a0a0a; display: flex; align-items: center; justify-content: center; }
.project-name { margin-left: 7px; font-size: 13.5px; color: #f5f9fc; }
.db-ic { margin-left: 18px; }
.run-group { position: absolute; left: 636px; top: 9px; width: 94px; height: 32px; border-radius: 4px; overflow: hidden; display: flex; background: #2a2060; }
.run-left { width: 26px; display: flex; align-items: center; justify-content: center; }
.run-right { flex: 1; background: #5a3bc6; display: flex; align-items: center; justify-content: center; font-size: 12.5px; font-weight: 700; color: #fff; border-radius: 4px 0 0 4px; }
.top-right { margin-left: auto; display: flex; align-items: center; padding-right: 18px; }
.access-btn { margin-left: 14px; width: 86px; height: 32px; border-radius: 4px; background: #1c2333; display: flex; align-items: center; justify-content: center; gap: 6px; font-size: 14px; color: #f5f9fc; }
.deploy-group { margin-left: 6px; width: 128px; height: 32px; border-radius: 4px; background: #1c2333; display: flex; }
.deploy-main { width: 101px; display: flex; align-items: center; gap: 7px; padding-left: 10px; font-size: 13.5px; border-right: 1px solid #2b3245; }
.deploy-copy { flex: 1; display: flex; align-items: center; justify-content: center; }
.bell { margin-left: 14px; position: relative; display: block; }
.bell-dot { position: absolute; top: -3px; right: -2px; width: 7px; height: 7px; border-radius: 50%; background: #f25a5a; }
.user-avatar { margin-left: 23px; width: 24px; height: 24px; border-radius: 50%; background: #2b3245; color: #8a93a3; font-size: 9.500px; display: flex; align-items: center; justify-content: center; }
.top-right > .i10 { margin-left: 3px; }
.workspace { height: 585px; flex: none; display: flex; }

.rail { width: 48px; flex: none; display: flex; flex-direction: column; align-items: center; position: relative; }
.rail-files { width: 32px; height: 32px; border: 1px solid #2b3245; border-radius: 6px; display: flex; align-items: center; justify-content: center; margin-bottom: 140px; }
.rail-item { height: 16px; position: relative; display: block; }
.rail-gap20 { margin-top: 20px; }
.rail-gap18 { margin-top: 18px; }
.rail-sep { height: 33px; width: 24px; position: relative; }
.rail-sep::before { content: ""; position: absolute; left: 0; right: 0; top: 16px; height: 1px; background: #2b3245; }
.rail-dot { position: absolute; left: -6px; top: 7px; width: 3px; height: 3px; border-radius: 50%; background: #9da2a6; }
.rail-dot-o { background: #9da2a6; }
.rail-green { color: #58c97f; }
.rail-help { position: absolute; left: 0; right: 0; top: 558px; text-align: center; font-size: 17px; line-height: 22px; color: #c2c8cc; }

.agent { width: 441px; flex: none; background: #1c2333; border-radius: 8px 8px 8px 8px; display: flex; flex-direction: column; overflow: hidden; }
.ptabs { height: 32px; flex: none; background: #171d2d; border-bottom: 1px solid #2b3245; display: flex; align-items: stretch; position: relative; }
.ptab { display: flex; align-items: center; gap: 6px; position: relative; padding-bottom: 3px; }
.ptab-agent { width: 97px; padding-left: 5px; gap: 5px; background: #1c2333; border-right: 1px solid #2b3245; border-top: 1px solid #0079f2; margin-bottom: -1px; }
.ptab-name { font-size: 12.500px; color: #f5f9fc; }
.ptab-dim { color: #c2c8cc; }
.ptab-x { color: #9da2a6; position: absolute; right: 6px; top: 10px; }
.ptab-plus { color: #9da2a6; align-self: center; margin-left: 11px; }
.kebab { position: absolute; right: 14px; top: 9px; display: flex; flex-direction: column; gap: 3px; }
.kebab i { width: 2.500px; height: 2.500px; border-radius: 50%; background: #c2c8cc; }

.historybar { margin: 8px 8px 0; height: 30px; flex: none; background: #2b3245; border: 1px solid #3c445c; border-radius: 8px; display: flex; align-items: center; font-size: 11.500px; padding: 0 0 2px 9px; }
.hb-ic { color: #9da2a6; }
.hb-muted { color: #a8adb3; margin-left: 4px; }
.hb-gauge { color: #d0d4d8; margin-left: 12px; }
.hb-title { font-weight: 700; color: #f0f2f4; margin-left: 4px; width: 243px; white-space: nowrap; font-size: 11px; }
.hb-plus { color: #9da2a6; margin-left: 9px; }

.checkpoint { margin: 12px 16px 0; height: 130px; flex: none; border: 1px solid #2f4150; border-radius: 8px; display: flex; position: relative; padding: 12px 0 0 12px; }
.cp-check { margin: 1px 8px 0 0; }
.cp-body { flex: 1; }
.cp-meta { display: flex; align-items: center; font-size: 11.500px; color: #a8adb3; height: 16px; }
.cp-dot { width: 3px; height: 3px; background: #a8adb3; margin: 0 8px; }
.cp-title { margin: 7px 0 0; font-size: 13.300px; line-height: 22px; color: #eef0f2; width: 260px; }
.cp-pen { display: inline-block; vertical-align: -3px; margin-left: 1px; }
.cp-btns { display: flex; gap: 8px; margin-top: 9px; }
.cp-btn { height: 28px; padding: 0 8px 1px; border: 1px solid #34404f; border-radius: 4px; display: flex; align-items: center; gap: 4px; font-size: 11.300px; color: #e6e9ec; }
.cp-btn-1 { padding: 0 9px 1px; }
.thumb { position: absolute; left: 296px; top: 29px; width: 99px; height: 71px; border: 1px solid #3b4352; border-radius: 4px; background: #0d0d0d; display: flex; flex-direction: column; overflow: hidden; }
.th-top { height: 5px; background: linear-gradient(90deg, #111 78%, #c9a218 80%, #c9a218 95%, #111 96%); }
.th-gold { height: 4px; background: #d4a00a; }
.th-dark { flex: 1; position: relative; }
.th-l1 { position: absolute; left: 1px; bottom: 6px; width: 24px; height: 1px; background: #ddd; }
.th-l2 { position: absolute; left: 1px; bottom: 3px; width: 33px; height: 1px; background: #bbb; }
.th-fortune { height: 3px; background: linear-gradient(90deg, #e6ac10, #ef7a1a, #e34b3c); }
.th-foot { height: 16px; position: relative; }
.th-y { position: absolute; left: 3px; top: 8px; width: 3px; height: 4px; background: #e0b014; }
.th-t { position: absolute; left: 8px; top: 10px; width: 20px; height: 1px; background: #999; }
.th-r { position: absolute; right: 2px; top: 9px; width: 14px; height: 2px; background: #555; }

.messages { padding: 20px 40px 0 20px; flex: 1; min-height: 0; }
.msg { margin: 0; font-size: 13.300px; line-height: 22.400px; color: #e6e9ec; }
.msg-2 { margin-top: 15px; }
.chips { display: flex; flex-wrap: wrap; gap: 8px; margin-top: 6px; }
.chip-break { width: 100%; height: 0; }
.chips { row-gap: 0; }
.chip { height: 28px; padding: 0 8px; border: 1px solid #3c445c; border-radius: 4px; font-size: 11.350px; color: #e6e9ec; white-space: nowrap; }
.chip-break { margin-bottom: 8px; }
.chip-more { height: 28px; padding: 0 11px 0 10px; border-radius: 4px; background: #2b3245; display: flex; align-items: center; gap: 5px; font-size: 11.500px; color: #e6e9ec; }

.composer { margin: 0 8px 8px; height: 75px; flex: none; background: #2b3245; border: 1px solid #0f7be0; border-radius: 6px; display: flex; flex-direction: column; padding: 8px 6px 7px 10px; }
.composer-text { font-size: 13.300px; line-height: 20px; color: #e6e9ec; flex: 1; }
.composer-row { display: flex; align-items: center; height: 24px; font-size: 11.500px; color: #a8adb3; }
.c-target { margin-left: 14px; }
.c-select { margin-left: 5px; flex: 1; }
.c-feedback { margin: 0 16px 3px 0; color: #8a8f96; }
.c-send { width: 24px; height: 24px; border-radius: 4px; background: #0053a6; display: flex; align-items: center; justify-content: center; }

.splitter { width: 6px; flex: none; position: relative; }
.splitter i { position: absolute; left: 2px; top: 282px; width: 2px; height: 23px; background: #3c4a63; }

.preview { width: 863px; flex: none; display: flex; flex-direction: column; overflow: hidden; border-radius: 8px 8px 0 0; background: #1c2333; }
.ptabs-preview { background: #171d2d; }
.ptab-preview { width: 100px; padding-left: 6px; gap: 6px; border-right: 1px solid #2b3245; }
.ptab-console { width: 102px; padding-left: 8px; gap: 8px; border-right: 1px solid #2b3245; }
.ptab-plus-p { margin-left: 12px; }
.urlbar { height: 36px; flex: none; display: flex; align-items: center; background: #1c2333; border-bottom: 1px solid #2b3245; position: relative; padding-left: 10px; }
.u-back { color: #6f7683; }
.u-fwd { color: #6f7683; margin-left: 16px; }
.u-reload { margin-left: 14px; }
.u-field { margin-left: 8px; width: 692px; height: 24px; background: #2b3245; border-radius: 4px; display: flex; align-items: center; padding: 0 8px 0 4px; font-size: 13px; }
.u-host { margin-left: 2px; color: #4fc774; }
.u-path { color: #f5f9fc; flex: 1; }
.u-go { color: #6f7683; }
.u-ic { color: #a8adb3; margin-left: 7px; }
.u-wrench { position: relative; margin-left: 10px; display: block; }
.u-badge { position: absolute; left: 7px; top: -6px; width: 14px; height: 14px; border-radius: 50%; background: #f25a5a; color: #26141a; font-size: 10px; font-weight: 400; line-height: 14px; text-align: center; }
.u-ic3 { margin-left: 10px; }

.site { flex: 1; min-height: 0; background: #111; display: flex; position: relative; overflow: hidden; font-family: "Liberation Sans", Arial, sans-serif; }
.site-side { width: 56px; flex: none; border-right: 1px solid #3b3012; display: flex; flex-direction: column; align-items: center; background: #0d0d0d; }
.site-logo { height: 72px; width: 100%; flex: none; display: flex; align-items: flex-start; justify-content: center; padding-top: 20px; }
.gem { width: 30px; height: 28px; filter: drop-shadow(0 0 5px rgba(245,197,24,.5)); }
.nav-first { position: relative; width: 100%; height: 73px; flex: none; display: flex; flex-direction: column; align-items: center; padding: 0; }
.nav-bar-l { position: absolute; left: 0; top: 0; width: 4px; height: 63px; background: #e0a80d; }
.nav-bar-r { position: absolute; right: 0; top: 0; width: 4px; height: 24px; background: #e0a80d; }
.nav-box { width: 32px; height: 32px; background: #1c1c1c; display: flex; align-items: center; justify-content: center; flex: none; }
.nav-box-on { background: linear-gradient(135deg, #f5c518, #c99a0a); box-shadow: 0 0 8px rgba(245,197,24,.35); }
.nav-box-wa { background: #25b95c; }
.nav-item { height: 59.500px; flex: none; display: flex; flex-direction: column; align-items: center; }
.nav-item-wa { margin-top: 2.500px; }
.nav-label { margin-top: 4px; font-size: 9px; line-height: 12px; color: #d4d4d4; white-space: nowrap; letter-spacing: -.1px; }
.nav-label-l { align-self: flex-start; margin: 3px 0 0 4px; line-height: 14px; }
.site-main { flex: 1; min-width: 0; padding-left: 8px; display: flex; flex-direction: column; }
.site-head { height: 52px; flex: none; display: flex; align-items: flex-start; padding-left: 32px; border-bottom: 1px solid #33290f; }
.burger { margin-top: 18px; width: 18px; display: flex; flex-direction: column; gap: 3px; }
.burger i { height: 3px; border-radius: 2px; background: #f5c518; }
.aff { margin-left: 20px; width: 128px; height: 51px; border: 2px solid #e5b011; border-radius: 16px; background: #131313; display: flex; align-items: center; padding-left: 15px; }
.aff-ic { width: 24px; height: 16px; flex: none; }
.aff-text { margin-left: 6px; display: flex; flex-direction: column; gap: 1px; }
.aff-1 { font-size: 12.500px; line-height: 16px; color: #fff; }
.aff-2 { font-size: 12px; line-height: 15px; color: #f5c518; }
.team { margin: 3px 0 0 20px; width: 46px; height: 46px; border: 1px solid #33301f; border-radius: 13px; background: #161616; display: flex; align-items: center; justify-content: center; }
.team-m { width: 33px; }
.team-1 { width: 32px; height: 36px; }
.team-2 { width: 24px; height: 34px; }
.promo { height: 40px; flex: none; background: linear-gradient(90deg, #b8860b, #d4a00a 50%, #d4a00a); display: flex; align-items: center; padding-left: 16px; }
.promo-1 { font-size: 14px; color: #fff; }
.promo-2 { margin-left: 12px; font-size: 11px; font-weight: 700; color: #eee; }
.hero { height: 322px; flex: none; margin: 15px 24px 0 24px; background: #0d0d0d; border-radius: 8px; position: relative; display: flex; flex-direction: column; justify-content: flex-end; padding: 0 0 20px 16px; overflow: hidden; }
.hero-arrow { position: absolute; left: 8px; top: 141px; width: 32px; height: 40px; border-radius: 16px; background: #000; color: #fff; font-size: 20px; line-height: 37px; text-align: center; }
.hero-title { margin: 0 0 11px 1px; font-size: 24px; line-height: 28px; color: #fff; font-weight: 700; white-space: nowrap; }
.hero-sub { margin: 0; font-size: 16px; line-height: 20px; color: #ccc; white-space: nowrap; }
.fortune { margin-top: 23px; height: 44px; flex: none; background: linear-gradient(90deg, #eab308, #f97316 50%, #e53e3e); display: flex; align-items: center; padding-left: 34px; position: relative; overflow: hidden; color: #000; font-size: 16px; white-space: nowrap; }
.fortune-gem { width: 18px; height: 18px; }
.fortune-name { margin-left: 10px; }
.fortune-val { margin-left: 9px; letter-spacing: 1px; }
.fortune-next { position: absolute; left: 676px; }
.site-scroll { width: 10px; flex: none; background: #0a0a0a; position: relative; }
.sc-up { position: absolute; left: 2px; top: 3px; border: 3px solid transparent; border-top: 0; border-bottom: 3px solid #c9a218; }
.sc-thumb { position: absolute; left: 2px; top: 12px; width: 6px; height: 108px; border-radius: 3px; background: #e5b70f; }
.sc-down { position: absolute; left: 2px; bottom: 3px; border: 3px solid transparent; border-bottom: 0; border-top: 3px solid #c9a218; }

.chat { position: absolute; left: 391px; top: 0; width: 447px; height: 493px; background: #1a1a1a; border: 1px solid #333; border-top: 0; border-radius: 0 0 16px 16px; display: flex; flex-direction: column; }
.chat-scroll { flex: 1; padding: 0 15px 0 16px; position: relative; }
.chat-user-bubble { margin: 0 0 0 auto; width: 69px; height: 14px; background: #ffd700; border-radius: 0 0 16px 16px; }
.chat-time-r { position: absolute; left: 337px; top: 19px; font-size: 12px; line-height: 14px; color: #6b7280; }
.chat-who { margin-top: 36px; height: 24px; display: flex; align-items: center; gap: 8px; }
.chat-bot { width: 24px; height: 24px; border-radius: 50%; background: #ffd700; display: flex; align-items: center; justify-content: center; }
.chat-name { font-size: 12px; color: #ffd700; }
.chat-bubble { margin-top: 4px; width: 309px; height: 91px; background: #2a2a2a; border: 1px solid #444; border-radius: 16px; padding: 14px 16px 0; }
.chat-bubble-text { font-size: 14px; line-height: 18px; color: #fff; font-weight: 400; -webkit-text-stroke: .2px #fff; white-space: nowrap; padding-bottom: 12px; border-bottom: 1px solid #444; }
.chat-rate { display: flex; align-items: center; margin-top: 8px; }
.chat-rate-q { font-size: 12px; color: #9ca3af; margin-right: 8px; }
.rate-btn { width: 24px; height: 24px; border-radius: 50%; background: #3a3a3a; display: flex; align-items: center; justify-content: center; margin-right: 8px; }
.thumb-down { transform: rotate(180deg) scaleX(-1); }
.chat-time-l { margin: 5px 0 0 8px; font-size: 12px; line-height: 14px; color: #6b7280; }
.chat-input-row { height: 83px; flex: none; border-top: 1px solid #333; display: flex; align-items: flex-start; padding: 16px 15px 0 16px; gap: 12px; }
.chat-input { width: 354px; height: 50px; background: #2a2a2a; border: 1px solid #444; border-radius: 16px; display: flex; align-items: center; padding-left: 16px; font-size: 16px; color: #888; }
.chat-send { width: 48px; height: 48px; margin-top: 2px; background: #4b5563; border-radius: 14px; display: flex; align-items: center; justify-content: center; }

/* Taskbar */
.taskbar { height: 40px; flex: none; background: linear-gradient(90deg, #34302b, #3a352c 50%, #403d2f 70%, #2e3336 95%); display: flex; align-items: stretch; color: #fff; position: relative; }
.start { width: 48px; display: flex; align-items: center; justify-content: center; }
.search { width: 288px; background: #f2f2f2; border: 1px solid #c7c7c7; border-bottom-width: 2px; display: flex; align-items: center; padding-left: 11px; position: relative; overflow: hidden; }
.s-text { margin-left: 10px; font-size: 14px; color: #222; }
.s-art { position: absolute; right: 0; bottom: 0; width: 62px; height: 40px; }
.tb-apps { display: flex; margin-left: 2px; }
.app-ic { width: 49px; display: flex; align-items: center; justify-content: center; position: relative; }
.app-chrome { background: rgba(255,255,255,.17); border-bottom: 3px solid #76b9ed; }
.chrome-badge { position: absolute; left: 25px; top: 19px; width: 16px; height: 16px; border-radius: 50%; background: #c2185b; color: #fff; font-size: 9px; font-weight: 700; line-height: 16px; text-align: center; }
.tray { position: absolute; right: 0; top: 0; bottom: 0; display: flex; align-items: center; }
.t-up { margin-right: 9px; }
.t-bat { width: 18px; height: 12px; margin-right: 9px; }
.t-wifi { margin-right: 7px; }
.clock { width: 72px; display: flex; flex-direction: column; align-items: center; font-size: 12.500px; line-height: 18px; color: #fff; }
.notif { position: relative; margin-left: 8px; display: block; }
.notif-n { position: absolute; left: 7px; top: 8px; width: 17px; height: 17px; border-radius: 50%; background: #3a3d3e; border: 1px solid #999; font-size: 10px; font-weight: 700; line-height: 15px; text-align: center; }
.showdesk { width: 1px; height: 100%; background: #888; margin-left: 19px; margin-right: 3px; }
```
